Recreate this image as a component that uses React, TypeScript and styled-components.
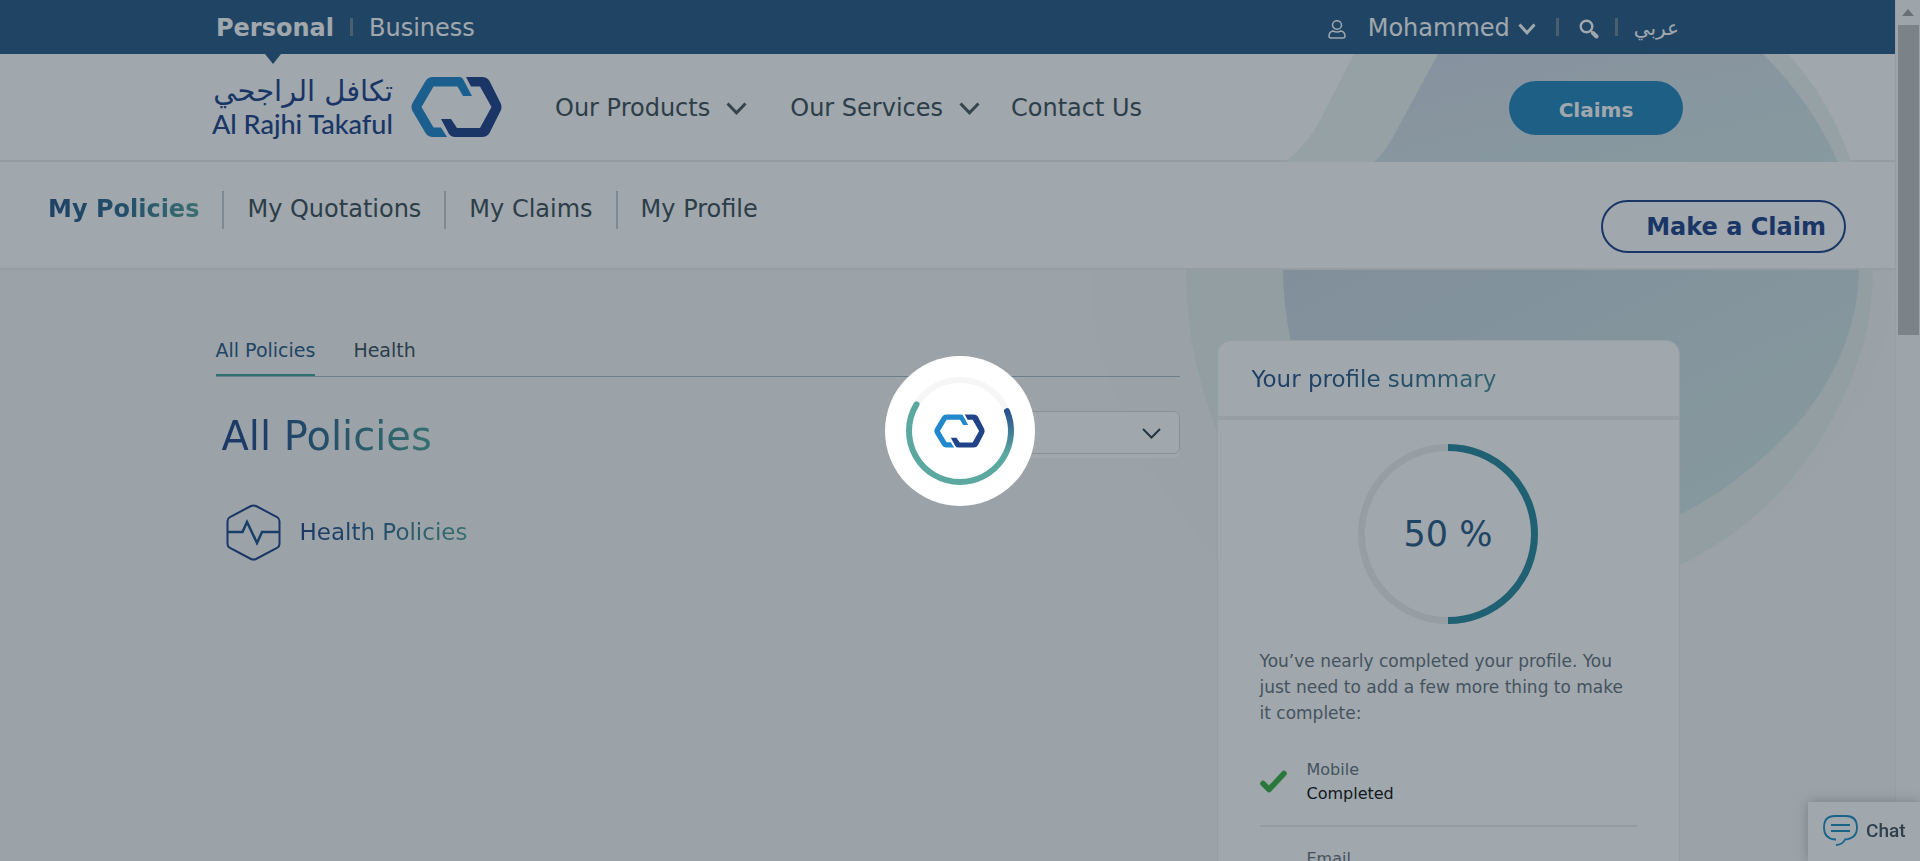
import React from "react";
import styled, { createGlobalStyle } from "styled-components";

const sans = `"DejaVu Sans", Verdana, sans-serif`;
const gradient = "linear-gradient(90deg, #214489 0%, #2b5f8c 35%, #4fa398 100%)";

const GlobalStyle = createGlobalStyle`
  * { box-sizing: border-box; }
  body { margin: 0; background: #f7f8f9; font-family: ${sans}; color: #3f5058; }
  a { color: inherit; text-decoration: none; }
  ul { list-style: none; margin: 0; padding: 0; }
  h1, h2, p { margin: 0; font-weight: 400; }
  button { font-family: inherit; cursor: pointer; }
`;

const Window = styled.div`
  position: relative;
  display: grid;
  grid-template-columns: minmax(0, 1fr) 25px;
  height: 100vh;
  overflow: hidden;
`;

const Page = styled.div`
  position: relative;
  isolation: isolate;
  overflow: hidden;
`;

const Backdrop = styled.svg`
  position: absolute;
  top: 0;
  right: 0;
  z-index: -1;
`;

const Container = styled.div<{ $max: number }>`
  display: flex;
  align-items: center;
  justify-content: space-between;
  width: 100%;
  max-width: ${(p) => p.$max}px;
  margin: 0 auto;
`;

const TopBar = styled.div`
  position: relative;
  z-index: 1;
  background: #2a5a85;
  color: #fff;
  font-size: 24px;
  line-height: 46px;
`;

const TopGroup = styled.div`
  display: flex;
  align-items: center;
  height: 54px;
  padding-top: 2px;
  svg { margin-top: 2px; }
`;

const Segment = styled.a<{ $active?: boolean }>`
  position: relative;
  font-weight: ${(p) => (p.$active ? 700 : 400)};
  ${(p) =>
    p.$active &&
    `&::after {
      content: "";
      position: absolute;
      left: 50%;
      bottom: -13px;
      margin-left: -10px;
      border: 8px solid transparent;
      border-bottom-width: 0;
      border-top: 10px solid #2a5a85;
    }`}
`;

const Bar = styled.span<{ $gap: number }>`
  width: 3px;
  height: 18px;
  margin: 0 ${(p) => p.$gap}px 2px;
  background: #6e8795;
`;

const PlainButton = styled.button`
  display: flex;
  align-items: center;
  gap: 8px;
  border: 0;
  padding: 0;
  background: none;
  color: inherit;
  font-size: 24px;
  line-height: 46px;
`;

const UserLink = styled.a`
  display: flex;
  margin-right: 22px;
`;

const Language = styled.a`
  font-size: 20px;
`;

const Header = styled.header`
  position: relative;
  isolation: isolate;
  display: flex;
  height: 108px;
  background: #fff;
  border-bottom: 2px solid #eceff0;
`;

const HeaderLeft = styled.div`
  display: flex;
  align-items: center;
  gap: 53px;
`;

const Logo = styled.a`
  display: flex;
  align-items: center;
  gap: 18px;
  color: #214489;
`;

const LogoWords = styled.span`
  display: flex;
  flex-direction: column;
  width: 181px;
  white-space: nowrap;
`;

const LogoArabic = styled.span`
  font-size: 29px;
  line-height: 34px;
`;

const LogoLatin = styled.span`
  font-family: Lato, "Open Sans", sans-serif;
  font-size: 27px;
  font-weight: 500;
  line-height: 32px;
`;

const MainNav = styled.nav`
  display: flex;
  align-items: center;
  gap: 43px;
  padding-top: 2px;
`;

const NavButton = styled.button`
  display: flex;
  align-items: center;
  gap: 16px;
  padding: 0;
  border: 0;
  background: none;
  color: inherit;
  font-size: 24px;
`;

const NavLink = styled.a`
  margin-left: -12px;
  font-size: 24px;
`;

const ClaimsButton = styled.button`
  width: 174px;
  height: 54px;
  margin-top: 2px;
  border: 0;
  border-radius: 27px;
  background: #2687bc;
  color: #fff;
  font-size: 20px;
  font-weight: 700;
  padding-top: 4px;
`;

const SubNav = styled.nav`
  display: flex;
  justify-content: space-between;
  align-items: flex-start;
  height: 108px;
  padding: 29px 49px 0 25px;
  background: #fff;
  border-bottom: 2px solid #eceff0;
`;

const SubNavList = styled.ul`
  display: flex;
`;

const SubNavItem = styled.li`
  padding: 0 23px;
  height: 38px;
  font-size: 24px;
  line-height: 36px;
  & + & { border-left: 2px solid #c8ced1; }
`;

const GradientLink = styled.a`
  font-weight: 700;
  background: linear-gradient(90deg, #28568a 0%, #2f6c8e 50%, #56a39b 100%);
  background-clip: text;
  color: transparent;
`;

const MakeClaim = styled.button`
  width: 245px;
  height: 53px;
  margin-top: 9px;
  padding: 0 18px 0 0;
  border: 2px solid #214489;
  border-radius: 27px;
  background: none;
  color: #214489;
  font-size: 24px;
  font-weight: 700;
  text-align: right;
  white-space: nowrap;
`;

const Content = styled.main`
  display: grid;
  grid-template-columns: minmax(0, 1fr) 463px;
  gap: 37px;
  max-width: 1464px;
  margin: 0 auto;
  padding-top: 70px;
`;

const Tabs = styled.div`
  display: flex;
  gap: 38px;
  border-bottom: 1px solid #a9bcc8;
`;

const Tab = styled.button<{ $active?: boolean }>`
  height: 36px;
  padding: 0 0 14px;
  border: 0;
  border-bottom: 2px solid ${(p) => (p.$active ? "#45a59c" : "transparent")};
  background: none;
  color: ${(p) => (p.$active ? "#2a5a85" : "#3f5058")};
  font-size: 19px;
  line-height: 20px;
`;

const TitleRow = styled.div`
  display: flex;
  justify-content: space-between;
  align-items: flex-start;
  padding: 34px 0 0 6px;
`;

const Title = styled.h1`
  font-size: 40px;
  line-height: 50px;
  background: ${gradient};
  background-clip: text;
  color: transparent;
`;

const SelectWrap = styled.div`
  position: relative;
  width: 260px;
  height: 47px;
  border-radius: 6px;
  background: #fff;
  svg {
    position: absolute;
    right: 19px;
    top: 17px;
    pointer-events: none;
  }
`;

const Select = styled.select`
  appearance: none;
  width: 100%;
  height: 43px;
  border: 1px solid #d3dde1;
  border-radius: 6px;
  background: #fff;
  font-size: 16px;
  padding: 0 48px 0 12px;
`;

const Group = styled.section`
  display: flex;
  align-items: center;
  gap: 19px;
  padding: 43px 0 0 10px;
`;

const GroupTitle = styled.h2`
  padding-bottom: 2px;
  font-size: 23px;
  line-height: 28px;
  background: ${gradient};
  background-clip: text;
  color: transparent;
`;

const Card = styled.aside`
  background: #fff;
  border: 1px solid #eef1f2;
  border-radius: 14px 14px 0 0;
`;

const CardHead = styled.div`
  height: 79px;
  padding: 22px 34px 0;
  border-bottom: 4px solid #f0f1f1;
`;

const CardTitle = styled.h2`
  display: inline-block;
  font-size: 23px;
  line-height: 32px;
  background: linear-gradient(90deg, #28528a 0%, #2b6088 50%, #4a8e98 100%);
  background-clip: text;
  color: transparent;
`;

const CardBody = styled.div`
  padding: 24px 42px;
`;

const Progress = styled.div`
  display: grid;
  place-items: center;
  width: 180px;
  margin: 0 auto 24px;
  > * { grid-area: 1 / 1; }
`;

const Percent = styled.span`
  color: #2a5a85;
  font-size: 35px;
  line-height: 40px;
`;

const Note = styled.p`
  color: #68747c;
  font-size: 17px;
  line-height: 26px;
`;

const Steps = styled.ul`
  padding-top: 12px;
`;

const Step = styled.li`
  display: grid;
  grid-template-columns: 27px 1fr;
  align-items: center;
  gap: 20px;
  height: 89px;
  border-bottom: 2px solid #eaefec;
  font-size: 16px;
  line-height: 24px;
`;

const StepLabel = styled.div`
  color: #68747c;
`;

const StepState = styled.div`
  color: #111;
`;

const Scrollbar = styled.div`
  display: flex;
  flex-direction: column;
  align-items: center;
  background: #fafafa;
  border-left: 1px solid #f0f0f0;
`;

const ArrowBox = styled.div`
  display: grid;
  place-items: center;
  height: 25px;
`;

const Thumb = styled.div`
  width: 21px;
  height: 36vh;
  background: #c1c1c1;
`;

const ChatButton = styled.button`
  position: fixed;
  right: 0;
  bottom: 0;
  display: flex;
  align-items: center;
  gap: 8px;
  width: 112px;
  height: 59px;
  padding: 0 0 2px 15px;
  border: 0;
  background: #fff;
  box-shadow: 0 0 12px rgba(0, 0, 0, 0.25);
  color: #44525e;
  font-family: Roboto, sans-serif;
  font-size: 19px;
  font-weight: 500;
`;

const Overlay = styled.div`
  position: fixed;
  inset: 0;
  display: grid;
  place-items: center;
  background: rgba(17, 36, 50, 0.4);
`;

const Loader = styled.div`
  display: grid;
  place-items: center;
  width: 150px;
  height: 150px;
  border-radius: 50%;
  background: #fff;
`;

function Chevron({ width, height, stroke, color }: { width: number; height: number; stroke: number; color: string }) {
  return (
    <svg width={width} height={height} viewBox={`0 0 ${width} ${height}`} fill="none" aria-hidden="true">
      <path d={`M${stroke / 2} ${stroke / 2} L${width / 2} ${height - stroke * 0.75} L${width - stroke / 2} ${stroke / 2}`} stroke={color} strokeWidth={stroke} />
    </svg>
  );
}

function MarkShapes() {
  return (
    <g>
      <path d="M48.5 1 H22 Q17 1 14.5 5 L1.5 27 Q-.5 31 1.5 35 L14.5 57 Q17 61 22 61 H36 L30 51.5 H22.5 L10.5 31 L22.5 10.5 H46.5 L52 20 H61 L53 5 Q51.5 1 48.500 1 Z" fill="#2088cb" />
      <path d="M55 1 H71 Q76 1 78.5 5 L89.5 27 Q91.5 31 89.5 35 L78.5 57 Q76 61 71 61 H43 Q40 61 38 58 L30 43 H40 L46 52 H69 L80.5 31 L69 10.5 H60 Z" fill="#214489" />
    </g>
  );
}

function Mark() {
  return (
    <svg width="91" height="62" viewBox="0 0 91 62" aria-hidden="true">
      <MarkShapes />
    </svg>
  );
}

function HeaderShapes() {
  return (
    <Backdrop width="805" height="108" viewBox="1090 54 805 108" aria-hidden="true">
      <defs>
        <linearGradient id="header" x1="0" y1="0" x2="1" y2="1">
          <stop offset="0" stopColor="#d3dbe8" />
          <stop offset="0.4" stopColor="#d7e2e8" />
          <stop offset="1" stopColor="#d6e9e8" />
        </linearGradient>
      </defs>
      <path d="M1354 54 L1316 128 Q1304 146 1286 162 L1851 162 Q1831 101 1788 54 Z" fill="#eef5f3" />
      <path d="M1438 54 L1393 137 Q1385 152 1374 162 L1838 162 Q1812 103 1763 54 Z" fill="url(#header)" />
    </Backdrop>
  );
}

function PageShapes() {
  return (
    <Backdrop width="805" height="861" viewBox="1090 0 805 861" aria-hidden="true">
      <defs>
        <linearGradient id="inner" x1="0" y1="0" x2="1" y2="1">
          <stop offset="0" stopColor="#ccd8e2" />
          <stop offset="0.35" stopColor="#cfdee4" />
          <stop offset="1" stopColor="#d6ebe4" />
        </linearGradient>
      </defs>
      <path d="M1090 268 Q1090 350 1126 420 Q1160 500 1230 570 L1680 570 Q1890 450 1895 268 Z" fill="#f5f7f7" />
      <path d="M1186 268 Q1185 350 1217 432 Q1260 530 1400 590 L1660 575 Q1780 520 1832 420 Q1874 345 1873 268 Z" fill="#e9f1ef" />
      <path d="M1283 268 Q1283 305 1291 342 Q1330 480 1500 550 L1640 532 Q1730 500 1804 416 Q1859 345 1859 268 Z" fill="url(#inner)" />
    </Backdrop>
  );
}

export default function App() {
  return (
    <>
      <GlobalStyle />
      <Window>
        <Page>
          <PageShapes />
          <TopBar>
            <Container $max={1463}>
              <TopGroup>
                <Segment href="#personal" $active>Personal</Segment>
                <Bar $gap={16} />
                <Segment href="#business">Business</Segment>
              </TopGroup>
              <TopGroup>
                <UserLink href="#account" aria-label="Account">
                  <svg width="18" height="19" viewBox="0 0 18 19" fill="none" stroke="#fff" strokeWidth="1.5" aria-hidden="true">
                    <ellipse cx="9" cy="5" rx="4.5" ry="4.3" />
                    <path d="M5 11 Q1 12 1 16 Q1 18 3 18 H15 Q17 18 17 16 Q17 12 13 11 Q9 13 5 11 Z" />
                  </svg>
                </UserLink>
                <PlainButton>
                  Mohammed
                  <Chevron width={18} height={12} stroke={3} color="#fff" />
                </PlainButton>
                <Bar $gap={20} />
                <PlainButton aria-label="Search">
                  <svg width="20" height="20" viewBox="0 0 20 20" fill="none" stroke="#fff" aria-hidden="true">
                    <circle cx="7.5" cy="7.5" r="5.8" strokeWidth="2.4" />
                    <path d="M12 12 L14 14" strokeWidth="2" />
                    <path d="M14 14 L17.5 17.5" strokeWidth="4" strokeLinecap="round" />
                  </svg>
                </PlainButton>
                <Bar $gap={16} />
                <Language href="#ar" lang="ar">عربي</Language>
              </TopGroup>
            </Container>
          </TopBar>
          <Header>
            <HeaderShapes />
            <Container $max={1471}>
              <HeaderLeft>
                <Logo href="#home">
                  <LogoWords>
                    <LogoArabic lang="ar" dir="rtl">تكافل الراجحي</LogoArabic>
                    <LogoLatin>Al Rajhi Takaful</LogoLatin>
                  </LogoWords>
                  <Mark />
                </Logo>
                <MainNav>
                  <NavButton>
                    Our Products
                    <Chevron width={21} height={13} stroke={3} color="#4d5a60" />
                  </NavButton>
                  <NavButton>
                    Our Services
                    <Chevron width={21} height={13} stroke={3} color="#4d5a60" />
                  </NavButton>
                  <NavLink href="#contact">Contact Us</NavLink>
                </MainNav>
              </HeaderLeft>
              <ClaimsButton>Claims</ClaimsButton>
            </Container>
          </Header>
          <SubNav>
            <SubNavList>
              <SubNavItem><GradientLink href="#policies">My Policies</GradientLink></SubNavItem>
              <SubNavItem><a href="#quotations">My Quotations</a></SubNavItem>
              <SubNavItem><a href="#claims">My Claims</a></SubNavItem>
              <SubNavItem><a href="#profile">My Profile</a></SubNavItem>
            </SubNavList>
            <MakeClaim>Make a Claim</MakeClaim>
          </SubNav>
          <Content>
            <div>
              <Tabs>
                <Tab $active>All Policies</Tab>
                <Tab>Health</Tab>
              </Tabs>
              <TitleRow>
                <Title>All Policies</Title>
                <SelectWrap>
                  <Select aria-label="Filter policies" />
                  <Chevron width={19} height={11} stroke={2} color="#33424c" />
                </SelectWrap>
              </TitleRow>
              <Group>
                <svg width="55" height="57" viewBox="0 0 55 57" fill="none" aria-hidden="true">
                  <path d="M25 2 Q27.5 .8 30 2 L51 13 Q53.5 14.5 53.5 17 V40 Q53.5 42.5 51 44 L30 55 Q27.5 56.2 25 55 L4 44 Q1.5 42.5 1.5 40 V17 Q1.5 14.5 4 13 Z" stroke="#214489" strokeWidth="2" />
                  <path d="M2 28 H16.5 L21 18 L31 39 L36 28 H53" stroke="#1c538a" strokeWidth="2.5" />
                </svg>
                <GroupTitle>Health Policies</GroupTitle>
              </Group>
            </div>
            <Card>
              <CardHead>
                <CardTitle>Your profile summary</CardTitle>
              </CardHead>
              <CardBody>
                <Progress>
                  <svg width="180" height="180" viewBox="0 0 180 180" fill="none" aria-hidden="true">
                    <circle cx="90" cy="90" r="86.5" stroke="#eff1f1" strokeWidth="7" />
                    <path d="M90 3.5 A86.5 86.5 0 0 1 90 176.5" stroke="#2b899e" strokeWidth="7" />
                  </svg>
                  <Percent>50 %</Percent>
                </Progress>
                <Note>You’ve nearly completed your profile. You just need to add a few more thing to make it complete:</Note>
                <Steps>
                  <Step>
                    <svg width="27" height="23" viewBox="0 0 27 23" fill="none" aria-hidden="true">
                      <path d="M3 13.5 L9 19.5 L24 3.5" stroke="#3cb043" strokeWidth="5.5" strokeLinecap="round" strokeLinejoin="round" />
                    </svg>
                    <div>
                      <StepLabel>Mobile</StepLabel>
                      <StepState>Completed</StepState>
                    </div>
                  </Step>
                  <Step>
                    <span />
                    <div>
                      <StepLabel>Email</StepLabel>
                      <StepState>Completed</StepState>
                    </div>
                  </Step>
                </Steps>
              </CardBody>
            </Card>
          </Content>
        </Page>
        <Scrollbar aria-hidden="true">
          <ArrowBox>
            <svg width="12" height="7" viewBox="0 0 12 7"><path d="M0 7 L6 0 L12 7 Z" fill="#a3a3a3" /></svg>
          </ArrowBox>
          <Thumb />
        </Scrollbar>
      </Window>
      <ChatButton>
        <svg width="35" height="31" viewBox="0 0 35 31" fill="none" stroke="#1f8fc4" strokeWidth="1.8" aria-hidden="true">
          <path d="M13 24.5 H12 Q1 23.500 1 12.5 Q1 1 12 1 H23 Q34 1 34 12.5 Q34 23.5 22 24.5 Q20 29.5 13 30" />
          <path d="M8 10 H27 M8 16 H27" />
        </svg>
        Chat
      </ChatButton>
      <Overlay role="status" aria-label="Loading">
        <Loader>
          <svg width="110" height="110" viewBox="-55 -55 110 110" fill="none" aria-hidden="true">
            <defs>
              <linearGradient id="ring" x1="0" y1="-20" x2="0" y2="51" gradientUnits="userSpaceOnUse">
                <stop offset="0" stopColor="#27508c" />
                <stop offset="0.6" stopColor="#5aa8a0" />
              </linearGradient>
            </defs>
            <circle r="51" stroke="#f6f6f6" strokeWidth="6" />
            <path d="M-43.5 -26.6 A51 51 0 0 0 0 51" stroke="#5aa8a0" strokeWidth="6" strokeLinecap="round" />
            <path d="M0 51 A51 51 0 0 0 47 -19.8" stroke="url(#ring)" strokeWidth="6" strokeLinecap="round" />
            <g transform="translate(-26 -17) scale(.56 .55)">
              <MarkShapes />
            </g>
          </svg>
        </Loader>
      </Overlay>
    </>
  );
}
